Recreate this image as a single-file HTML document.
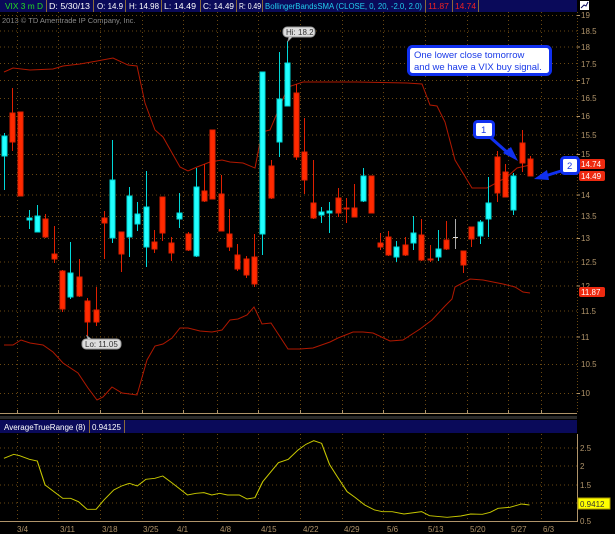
<!DOCTYPE html>
<html><head><meta charset="utf-8"><style>
html,body{margin:0;padding:0;background:#000;width:615px;height:534px;overflow:hidden}
svg{display:block}
text{font-family:"Liberation Sans",sans-serif}
</style></head><body>
<svg width="615" height="534" viewBox="0 0 615 534" xmlns="http://www.w3.org/2000/svg">
<rect width="615" height="534" fill="#000"/>
<!-- top bar -->
<rect x="0" y="0" width="577" height="12" fill="#0a0a5a"/>
<g font-size="8" fill="#fff">
<text x="5" y="9" fill="#22dd22" textLength="38" lengthAdjust="spacingAndGlyphs">VIX 3 m D</text>
<line x1="46.5" y1="0" x2="46.5" y2="12" stroke="#8a6a3a"/>
<text x="49" y="9" textLength="41" lengthAdjust="spacingAndGlyphs">D: 5/30/13</text>
<line x1="93.5" y1="0" x2="93.5" y2="12" stroke="#8a6a3a"/>
<text x="97" y="9" textLength="26" lengthAdjust="spacingAndGlyphs">O: 14.9</text>
<line x1="125.5" y1="0" x2="125.5" y2="12" stroke="#8a6a3a"/>
<text x="129" y="9" textLength="30" lengthAdjust="spacingAndGlyphs">H: 14.98</text>
<line x1="161.5" y1="0" x2="161.5" y2="12" stroke="#8a6a3a"/>
<text x="164" y="9" textLength="32" lengthAdjust="spacingAndGlyphs">L: 14.49</text>
<line x1="200.5" y1="0" x2="200.5" y2="12" stroke="#8a6a3a"/>
<text x="203" y="9" textLength="31" lengthAdjust="spacingAndGlyphs">C: 14.49</text>
<line x1="236.5" y1="0" x2="236.5" y2="12" stroke="#8a6a3a"/>
<text x="239" y="9" textLength="22" lengthAdjust="spacingAndGlyphs">R: 0.49</text>
<line x1="262.5" y1="0" x2="262.5" y2="12" stroke="#8a6a3a"/>
<text x="265" y="9" fill="#22ccee" textLength="157" lengthAdjust="spacingAndGlyphs">BollingerBandsSMA (CLOSE, 0, 20, -2.0, 2.0)</text>
<line x1="425.5" y1="0" x2="425.5" y2="12" stroke="#8a6a3a"/>
<text x="428" y="9" fill="#ee2222" textLength="21" lengthAdjust="spacingAndGlyphs">11.87</text>
<line x1="452.5" y1="0" x2="452.5" y2="12" stroke="#8a6a3a"/>
<text x="455" y="9" fill="#ee2222" textLength="21" lengthAdjust="spacingAndGlyphs">14.74</text>
<line x1="478.5" y1="0" x2="478.5" y2="12" stroke="#8a6a3a"/>
</g>
<rect x="580" y="1" width="9" height="9" fill="#fff"/>
<path d="M581 8 L584 5 L586 6 L588 2" stroke="#0a0a5a" fill="none" stroke-width="1"/>
<text x="2" y="23" font-size="7.5" fill="#888">2013 © TD Ameritrade IP Company, Inc.</text>

<!-- grid -->
<g stroke="#6a4812" stroke-width="1" stroke-dasharray="1,3">
<line x1="0" x2="577" y1="15.5" y2="15.5"/><line x1="0" x2="577" y1="31" y2="31"/><line x1="0" x2="577" y1="47" y2="47"/>
<line x1="0" x2="577" y1="63.5" y2="63.5"/><line x1="0" x2="577" y1="80.5" y2="80.5"/><line x1="0" x2="577" y1="98.5" y2="98.5"/>
<line x1="0" x2="577" y1="116.5" y2="116.5"/><line x1="0" x2="577" y1="135" y2="135"/><line x1="0" x2="577" y1="154.5" y2="154.5"/>
<line x1="0" x2="577" y1="174.5" y2="174.5"/><line x1="0" x2="577" y1="195" y2="195"/><line x1="0" x2="577" y1="216.5" y2="216.5"/>
<line x1="0" x2="577" y1="238.5" y2="238.5"/><line x1="0" x2="577" y1="262" y2="262"/><line x1="0" x2="577" y1="286" y2="286"/>
<line x1="0" x2="577" y1="311" y2="311"/><line x1="0" x2="577" y1="337" y2="337"/><line x1="0" x2="577" y1="364.5" y2="364.5"/>
<line x1="0" x2="577" y1="393.5" y2="393.5"/>
</g>
<g stroke="#6a4812" stroke-width="1" stroke-dasharray="1,3">
<line y1="12" y2="412" x1="17.5" x2="17.5"/><line y1="12" y2="412" x1="58.5" x2="58.5"/><line y1="12" y2="412" x1="100.5" x2="100.5"/>
<line y1="12" y2="412" x1="142.5" x2="142.5"/><line y1="12" y2="412" x1="183.5" x2="183.5"/><line y1="12" y2="412" x1="217.5" x2="217.5"/>
<line y1="12" y2="412" x1="258.5" x2="258.5"/><line y1="12" y2="412" x1="300.5" x2="300.5"/><line y1="12" y2="412" x1="342.5" x2="342.5"/>
<line y1="12" y2="412" x1="383.5" x2="383.5"/><line y1="12" y2="412" x1="425.5" x2="425.5"/><line y1="12" y2="412" x1="467.5" x2="467.5"/>
<line y1="12" y2="412" x1="508.5" x2="508.5"/><line y1="12" y2="412" x1="541.5" x2="541.5"/>
</g>
<!-- right axis -->
<line x1="577.5" y1="12" x2="577.5" y2="414" stroke="#6a4812" stroke-dasharray="1,2"/>
<g font-size="8" fill="#b0946a">
<text x="581" y="18">19</text><text x="581" y="34">18.5</text><text x="581" y="50">18</text><text x="581" y="67">17.5</text>
<text x="581" y="84">17</text><text x="581" y="101">16.5</text><text x="581" y="119">16</text><text x="581" y="138">15.5</text>
<text x="581" y="157">15</text><text x="581" y="198">14</text><text x="581" y="219">13.5</text>
<text x="581" y="241">13</text><text x="581" y="265">12.5</text><text x="581" y="289">12</text><text x="581" y="314">11.5</text>
<text x="581" y="340">11</text><text x="581" y="367">10.5</text><text x="581" y="396">10</text>
</g>
<g stroke="#b0946a"><line x1="577" x2="580" y1="15.5" y2="15.5"/><line x1="577" x2="580" y1="47" y2="47"/><line x1="577" x2="580" y1="80.5" y2="80.5"/><line x1="577" x2="580" y1="116.5" y2="116.5"/><line x1="577" x2="580" y1="154.5" y2="154.5"/><line x1="577" x2="580" y1="195" y2="195"/><line x1="577" x2="580" y1="238.5" y2="238.5"/><line x1="577" x2="580" y1="286" y2="286"/><line x1="577" x2="580" y1="337" y2="337"/><line x1="577" x2="580" y1="393.5" y2="393.5"/></g>
<rect x="579" y="159" width="26" height="10" rx="2" fill="#ee2a10"/><text x="581" y="167" font-size="8" fill="#fff">14.74</text>
<rect x="579" y="171" width="26" height="10" rx="2" fill="#ee2a10"/><text x="581" y="179" font-size="8" fill="#fff">14.49</text>
<rect x="579" y="287" width="26" height="10" rx="2" fill="#ee2a10"/><text x="581" y="295" font-size="8" fill="#fff">11.87</text>

<!-- bollinger bands -->
<g fill="none" stroke="#b01800" stroke-width="1">
<polyline points="4,72 13,68 30,70 53,69 63,66 80,64 97,61 113,58 128,65 137,66 145,103 155,130 163,137 180,167 188,171 197,167 210,162 222,160 230,162 243,163 255,168 262,132 270,130 288,87 303,82 357,82 407,83 422,84 430,105 437,106 445,122 455,160 472,188 487,188 507,177 517,168 530,165"/>
<polyline points="4,345 13,345 21,340 30,343 43,345 53,352 63,363 78,373 88,388 97,400 103,397 112,387 122,393 137,395 147,360 155,346 163,344 172,338 180,328 188,328 200,331 212,332 222,330 230,320 238,319 247,315 254,307 262,324 271,323 288,349 300,349 313,348 330,342 338,338 353,332 363,332 373,333 390,341 403,340 420,329 432,320 445,306 452,299 455,287 470,279 483,280 503,284 515,287 523,292 530,293"/>
</g>

<!-- candles -->
<g stroke-width="1">
<g stroke="#00d8d8" fill="#22ffff">
<line x1="4.5" x2="4.5" y1="133" y2="190"/><rect x="2" y="136" width="5" height="20"/>
<line x1="29.5" x2="29.5" y1="210" y2="229"/><rect x="27" y="218" width="5" height="2"/>
<line x1="37.5" x2="37.5" y1="205" y2="232"/><rect x="35" y="216" width="5" height="16"/>
<line x1="70.5" x2="70.5" y1="242" y2="299"/><rect x="68" y="273" width="5" height="24"/>
<line x1="112.5" x2="112.5" y1="140" y2="243"/><rect x="110" y="180" width="5" height="58"/>
<line x1="129.5" x2="129.5" y1="187" y2="257"/><rect x="127" y="196" width="5" height="41"/>
<line x1="137.5" x2="137.5" y1="202" y2="231"/><rect x="135" y="214" width="5" height="10"/>
<line x1="146.5" x2="146.5" y1="171" y2="267"/><rect x="144" y="207" width="5" height="40"/>
<line x1="179.5" x2="179.5" y1="193" y2="228"/><rect x="177" y="213" width="5" height="6"/>
<line x1="196.5" x2="196.5" y1="168" y2="257"/><rect x="194" y="187" width="5" height="69"/>
<line x1="262.5" x2="262.5" y1="72" y2="255"/><rect x="260" y="72" width="5" height="162"/>
<line x1="279.5" x2="279.5" y1="52" y2="157"/><rect x="277" y="99" width="5" height="43"/>
<line x1="287.5" x2="287.5" y1="41" y2="106"/><rect x="285" y="63" width="5" height="43"/>
<line x1="321.5" x2="321.5" y1="207" y2="223"/><rect x="319" y="212" width="5" height="3"/>
<line x1="329.5" x2="329.5" y1="202" y2="233"/><rect x="327" y="211" width="5" height="2"/>
<line x1="363.5" x2="363.5" y1="168" y2="202"/><rect x="361" y="176" width="5" height="25"/>
<line x1="396.5" x2="396.5" y1="241" y2="262"/><rect x="394" y="247" width="5" height="10"/>
<line x1="413.5" x2="413.5" y1="216" y2="250"/><rect x="411" y="233" width="5" height="10"/>
<line x1="438.5" x2="438.5" y1="230" y2="261"/><rect x="436" y="249" width="5" height="8"/>
<line x1="480.5" x2="480.5" y1="220" y2="244"/><rect x="478" y="222" width="5" height="14"/>
<line x1="488.5" x2="488.5" y1="177" y2="237"/><rect x="486" y="203" width="5" height="16"/>
<line x1="513.5" x2="513.5" y1="173" y2="215"/><rect x="511" y="176" width="5" height="34"/>
</g>
<g stroke="#e02000" fill="#ff2a00">
<line x1="12.5" x2="12.5" y1="88" y2="151"/><rect x="10" y="113" width="5" height="29"/>
<rect x="18" y="112" width="5" height="84"/>
<line x1="45.5" x2="45.5" y1="214" y2="238"/><rect x="43" y="219" width="5" height="18"/>
<line x1="54.5" x2="54.5" y1="226" y2="263"/><rect x="52" y="254" width="5" height="5"/>
<line x1="62.5" x2="62.5" y1="270" y2="312"/><rect x="60" y="271" width="5" height="38"/>
<line x1="79.5" x2="79.5" y1="259" y2="297"/><rect x="77" y="277" width="5" height="19"/>
<line x1="87.5" x2="87.5" y1="298" y2="336"/><rect x="85" y="301" width="5" height="21"/>
<line x1="96.5" x2="96.5" y1="287" y2="326"/><rect x="94" y="310" width="5" height="12"/>
<line x1="104.5" x2="104.5" y1="211" y2="259"/><rect x="102" y="218" width="5" height="5"/>
<line x1="121.5" x2="121.5" y1="232" y2="272"/><rect x="119" y="232" width="5" height="22"/>
<line x1="154.5" x2="154.5" y1="230" y2="253"/><rect x="152" y="242" width="5" height="7"/>
<line x1="162.5" x2="162.5" y1="197" y2="241"/><rect x="160" y="197" width="5" height="36"/>
<line x1="171.5" x2="171.5" y1="237" y2="261"/><rect x="169" y="243" width="5" height="10"/>
<line x1="188.5" x2="188.5" y1="232" y2="251"/><rect x="186" y="234" width="5" height="16"/>
<line x1="204.5" x2="204.5" y1="164" y2="202"/><rect x="202" y="191" width="5" height="10"/>
<rect x="210" y="130" width="5" height="69"/>
<line x1="221.5" x2="221.5" y1="175" y2="231"/><rect x="219" y="194" width="5" height="37"/>
<line x1="229.5" x2="229.5" y1="209" y2="251"/><rect x="227" y="234" width="5" height="13"/>
<line x1="237.5" x2="237.5" y1="244" y2="271"/><rect x="235" y="255" width="5" height="14"/>
<line x1="246.5" x2="246.5" y1="256" y2="278"/><rect x="244" y="259" width="5" height="16"/>
<line x1="254.5" x2="254.5" y1="234" y2="287"/><rect x="252" y="257" width="5" height="27"/>
<line x1="271.5" x2="271.5" y1="160" y2="199"/><rect x="269" y="166" width="5" height="32"/>
<line x1="296.5" x2="296.5" y1="84" y2="160"/><rect x="294" y="93" width="5" height="64"/>
<line x1="304.5" x2="304.5" y1="118" y2="194"/><rect x="302" y="152" width="5" height="28"/>
<line x1="313.5" x2="313.5" y1="160" y2="219"/><rect x="311" y="203" width="5" height="15"/>
<line x1="338.5" x2="338.5" y1="188" y2="217"/><rect x="336" y="198" width="5" height="15"/>
<line x1="346.5" x2="346.5" y1="198" y2="223"/><rect x="344" y="208" width="5" height="1"/>
<line x1="354.5" x2="354.5" y1="184" y2="217"/><rect x="352" y="208" width="5" height="9"/>
<rect x="369" y="176" width="5" height="37"/>
<line x1="380.5" x2="380.5" y1="233" y2="250"/><rect x="378" y="243" width="5" height="4"/>
<line x1="388.5" x2="388.5" y1="231" y2="256"/><rect x="386" y="237" width="5" height="18"/>
<line x1="405.5" x2="405.5" y1="237" y2="256"/><rect x="403" y="245" width="5" height="10"/>
<line x1="421.5" x2="421.5" y1="219" y2="261"/><rect x="419" y="235" width="5" height="25"/>
<line x1="430.5" x2="430.5" y1="245" y2="262"/><rect x="428" y="259" width="5" height="1"/>
<line x1="446.5" x2="446.5" y1="221" y2="250"/><rect x="444" y="240" width="5" height="9"/>
<line x1="463.5" x2="463.5" y1="251" y2="273"/><rect x="461" y="251" width="5" height="14"/>
<line x1="471.5" x2="471.5" y1="227" y2="247"/><rect x="469" y="227" width="5" height="12"/>
<line x1="497.5" x2="497.5" y1="151" y2="202"/><rect x="495" y="157" width="5" height="36"/>
<line x1="505.5" x2="505.5" y1="164" y2="197"/><rect x="503" y="172" width="5" height="25"/>
<line x1="522.5" x2="522.5" y1="130" y2="172"/><rect x="520" y="143" width="5" height="20"/>
<line x1="530.5" x2="530.5" y1="156" y2="176"/><rect x="528" y="159" width="5" height="17"/>
</g>
<line x1="455.5" x2="455.5" y1="219" y2="249" stroke="#aaa"/><line x1="453" x2="458" y1="237.5" y2="237.5" stroke="#ddd"/>
</g>

<!-- Hi / Lo labels -->
<rect x="283" y="27" width="32" height="10" rx="4" fill="#ddd" stroke="#999"/>
<path d="M289 37 L288 41 L292 37" fill="#ddd" stroke="#999"/>
<text x="286" y="35" font-size="8" fill="#333">Hi: 18.2</text>
<rect x="82" y="339" width="39" height="10" rx="4" fill="#ddd" stroke="#999"/>
<path d="M88 339 L87 336 L91 339" fill="#ddd" stroke="#999"/>
<text x="85" y="347" font-size="8" fill="#333">Lo: 11.05</text>

<!-- callouts -->
<rect x="408.5" y="46.5" width="142" height="28" rx="4" fill="#fff" stroke="#1030f0" stroke-width="3"/>
<text x="414" y="58" font-size="9.5" fill="#1a3ae8">One lower close tomorrow</text>
<text x="414" y="70" font-size="9.5" fill="#1a3ae8">and we have a VIX buy signal.</text>
<rect x="474.5" y="121.5" width="19" height="16" rx="3" fill="#fff" stroke="#1030f0" stroke-width="3"/>
<text x="481" y="133" font-size="9.5" fill="#1a3ae8">1</text>
<rect x="561.5" y="157.5" width="17" height="16" rx="3" fill="#fff" stroke="#1030f0" stroke-width="3"/>
<text x="567" y="169" font-size="9.5" fill="#1a3ae8">2</text>
<path d="M491 138 L508 153" stroke="#1030f0" stroke-width="3"/>
<path d="M518 161 L503 153 L511 147 Z" fill="#1030f0"/>
<path d="M561 171 L545 176" stroke="#1030f0" stroke-width="3"/>
<path d="M534 179 L547 170 L549 180 Z" fill="#1030f0"/>

<!-- separator -->
<line x1="0" y1="413.5" x2="577" y2="413.5" stroke="#b0946a"/>
<g stroke="#b0946a"><line x1="17.5" x2="17.5" y1="410" y2="413"/><line x1="58.5" x2="58.5" y1="410" y2="413"/><line x1="100.5" x2="100.5" y1="410" y2="413"/><line x1="142.5" x2="142.5" y1="410" y2="413"/><line x1="183.5" x2="183.5" y1="410" y2="413"/><line x1="217.5" x2="217.5" y1="410" y2="413"/><line x1="258.5" x2="258.5" y1="410" y2="413"/><line x1="300.5" x2="300.5" y1="410" y2="413"/><line x1="342.5" x2="342.5" y1="410" y2="413"/><line x1="383.5" x2="383.5" y1="410" y2="413"/><line x1="425.5" x2="425.5" y1="410" y2="413"/><line x1="467.5" x2="467.5" y1="410" y2="413"/><line x1="508.5" x2="508.5" y1="410" y2="413"/><line x1="541.5" x2="541.5" y1="410" y2="413"/></g>
<rect x="0" y="416" width="577" height="3" fill="#2a2a2a"/>

<!-- lower panel header -->
<rect x="0" y="420" width="577" height="13" fill="#0a0a5a"/>
<text x="4" y="430" font-size="8" fill="#fff">AverageTrueRange (8)</text>
<line x1="89.5" y1="420" x2="89.5" y2="433" stroke="#8a6a3a"/>
<text x="92" y="430" font-size="8" fill="#fff">0.94125</text>
<line x1="124.5" y1="420" x2="124.5" y2="433" stroke="#8a6a3a"/>

<g stroke="#6a4812" stroke-dasharray="1,3">
<line x1="0" x2="577" y1="448" y2="448"/><line x1="0" x2="577" y1="466" y2="466"/><line x1="0" x2="577" y1="485" y2="485"/><line x1="0" x2="577" y1="503" y2="503"/>
<line y1="434" y2="521" x1="17.5" x2="17.5"/><line y1="434" y2="521" x1="58.5" x2="58.5"/><line y1="434" y2="521" x1="100.5" x2="100.5"/><line y1="434" y2="521" x1="142.5" x2="142.5"/><line y1="434" y2="521" x1="183.5" x2="183.5"/><line y1="434" y2="521" x1="217.5" x2="217.5"/><line y1="434" y2="521" x1="258.5" x2="258.5"/><line y1="434" y2="521" x1="300.5" x2="300.5"/><line y1="434" y2="521" x1="342.5" x2="342.5"/><line y1="434" y2="521" x1="383.5" x2="383.5"/><line y1="434" y2="521" x1="425.5" x2="425.5"/><line y1="434" y2="521" x1="467.5" x2="467.5"/><line y1="434" y2="521" x1="508.5" x2="508.5"/><line y1="434" y2="521" x1="541.5" x2="541.5"/>
</g>
<line x1="0" y1="521.5" x2="577" y2="521.5" stroke="#b0946a"/>
<line x1="577.5" y1="434" x2="577.5" y2="522" stroke="#b0946a"/>
<g font-size="8" fill="#b0946a">
<text x="580" y="451">2.5</text><text x="580" y="469">2</text><text x="580" y="488">1.5</text><text x="580" y="524">0.5</text>
</g>
<rect x="578" y="498" width="32" height="11" fill="#ffff00" stroke="#aa9900"/>
<text x="580" y="507" font-size="8" fill="#333">0.9412</text>

<g transform="translate(0,410) scale(0.3922,0.3333)">
<polyline fill="none" stroke="#c8c800" stroke-width="2.8" points="10,145 35,133 50,137 75,148 95,153 115,225 160,265 180,265 200,275 222,298 245,298 265,270 290,240 310,228 330,220 350,228 372,208 395,205 415,198 440,220 478,255 500,250 520,248 540,255 560,250 580,255 610,255 630,267 650,263 670,215 710,158 735,148 760,120 780,103 800,92 820,100 840,163 860,200 885,245 905,262 930,285 955,300 975,305 1000,305 1030,312 1075,305 1095,317 1140,322 1175,318 1200,312 1230,313 1250,307 1270,295 1300,292 1330,282 1350,285"/>
</g>

<g font-size="8" fill="#b0946a">
<text x="17" y="532">3/4</text><text x="60" y="532">3/11</text><text x="102" y="532">3/18</text><text x="143" y="532">3/25</text>
<text x="177" y="532">4/1</text><text x="220" y="532">4/8</text><text x="261" y="532">4/15</text><text x="303" y="532">4/22</text>
<text x="344" y="532">4/29</text><text x="387" y="532">5/6</text><text x="428" y="532">5/13</text><text x="470" y="532">5/20</text>
<text x="511" y="532">5/27</text><text x="543" y="532">6/3</text>
</g>
</svg>
</body></html>
